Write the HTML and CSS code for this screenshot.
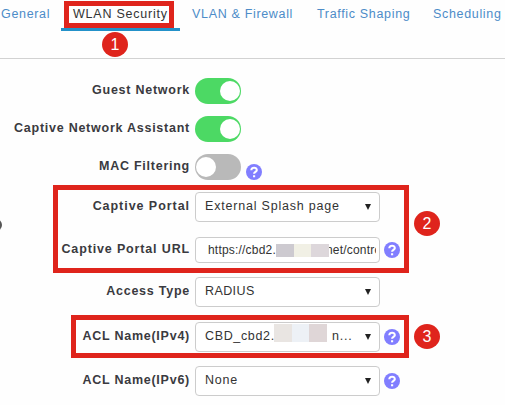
FILE: index.html
```
<!DOCTYPE html>
<html>
<head>
<meta charset="utf-8" />
<title>WLAN Security</title>
<link rel="stylesheet" href="styles.css">
</head>

<body>
<div class="page">
	<ul class="tabs">
    	<li class="t1"><span>General</span></li>
        <li class="t2 active"><span>WLAN Security</span></li>
        <li class="t3"><span>VLAN &amp; Firewall</span></li>
        <li class="t4"><span>Traffic Shaping</span></li>
        <li class="t5"><span>Scheduling</span></li>
    </ul>
    <div class="form">
    	<div class="row sw">
        	<label>Guest Network</label>
            <span class="toggle on"></span>
        </div>
        <div class="row sw">
        	<label>Captive Network Assistant</label>
            <span class="toggle on"></span>
        </div>
        <div class="row sw">
        	<label>MAC Filtering</label>
            <span class="toggle"></span>
            <svg class="help low" viewBox="0 0 16 16"><circle cx="8" cy="8" r="8" /><path d="M5.3 6.2C5.3 2.8 10.9 2.9 10.8 6.1C10.7 7.9 8.1 7.8 8.1 9.8M8.1 11.2V13.2" /></svg>
        </div>
        <div class="row portal">
        	<label>Captive Portal</label>
            <div class="select"><span>External Splash page</span><i></i></div>
        </div>
        <div class="row url">
        	<label>Captive Portal URL</label>
            <div class="input"><span>https://cbd2.</span><b class="mosaic m1"></b><span class="tail">net/contro</span></div>
            <svg class="help" viewBox="0 0 16 16"><circle cx="8" cy="8" r="8" /><path d="M5.3 6.2C5.3 2.8 10.9 2.9 10.8 6.1C10.7 7.9 8.1 7.8 8.1 9.8M8.1 11.2V13.2" /></svg>
        </div>
        <div class="row access">
        	<label>Access Type</label>
            <div class="select radius"><span>RADIUS</span><i></i></div>
        </div>
        <div class="row acl">
        	<label>ACL Name(IPv4)</label>
            <div class="select"><span class="host">CBD_cbd2.</span><b class="mosaic m2"></b><span>n...</span><i></i></div>
            <svg class="help" viewBox="0 0 16 16"><circle cx="8" cy="8" r="8" /><path d="M5.3 6.2C5.3 2.8 10.9 2.9 10.8 6.1C10.7 7.9 8.1 7.8 8.1 9.8M8.1 11.2V13.2" /></svg>
        </div>
        <div class="row acl">
        	<label>ACL Name(IPv6)</label>
            <div class="select"><span>None</span><i></i></div>
            <svg class="help" viewBox="0 0 16 16"><circle cx="8" cy="8" r="8" /><path d="M5.3 6.2C5.3 2.8 10.9 2.9 10.8 6.1C10.7 7.9 8.1 7.8 8.1 9.8M8.1 11.2V13.2" /></svg>
        </div>
    </div>
    <!-- step marks -->
    <div class="frame f1"></div>
    <div class="frame f2"></div>
    <div class="frame f3"></div>
    <span class="step s1">1</span>
    <span class="step s2">2</span>
    <span class="step s3">3</span>
    <span class="dot"></span>
</div>
</body>
</html>
```

FILE: styles.css
```
*{ margin:0; padding:0; box-sizing:border-box;}
body{ background:#fefefe; font:12.5px "Liberation Sans", Arial, sans-serif; color:#333; overflow:hidden;}
.page{ width:505px; height:405px; position:relative; overflow:hidden;}

.tabs{ display:flex; height:59px; border-bottom:1px solid #d2d2d2; list-style:none;}
.tabs li{ height:31px; padding:7px 0 0 12px; line-height:14px; letter-spacing:0.67px; color:#4d8cc8; white-space:nowrap; flex:none;}
.tabs .t1{ width:61px; padding-left:1px;}
.tabs .t2{ width:119px;}
.tabs .t3{ width:125px;}
.tabs .t4{ width:116px;}
.tabs .t5{ width:84px;}
.tabs .active{ color:#333; border-bottom:3px solid #2391c9; letter-spacing:0.78px;}

.form{ padding-top:19px;}
.row{ display:flex; align-items:center;}
.row label{ width:190px; margin-right:5px; text-align:right; font-weight:bold; letter-spacing:0.75px; line-height:14px; color:#3a3a40; white-space:nowrap; flex:none;}
.sw{ height:26px; margin-bottom:12px;}
.sw label{ padding-bottom:3px;}
.portal{ height:30px; margin-bottom:15px;}
.url{ height:26px; margin-bottom:14px;}
.access{ height:30px; margin-bottom:15px;}
.acl{ height:30px; margin-bottom:14px;}
.portal label, .access label, .acl label{ padding-bottom:3px;}
.portal label{ letter-spacing:0.95px;}
.url label{ padding-bottom:3px; letter-spacing:0.85px;}

.toggle{ width:46px; height:26px; border-radius:13px; background:#b9b9b9; padding:3px 1px; flex:none;}
.toggle:before{ content:""; display:block; width:20px; height:20px; border-radius:50%; background:#fff;}
.on{ background:#4cd964; padding-left:25px;}

.select, .input{ width:185px; height:30px; border:1px solid #ccc; border-radius:4px; background:#fff; display:flex; align-items:center; white-space:nowrap; flex:none;}
.select{ padding:0 8px 0 9px; letter-spacing:0.8px;}
.select span{ padding-bottom:2px;}
.select i{ margin-left:auto; border:3.5px solid transparent; border-top:6px solid #222; border-bottom:0;}
.radius{ letter-spacing:0.4px;}
.input{ height:26px; padding:0 4px 0 12px; font-size:12px; letter-spacing:0.2px; overflow:hidden;}
.input span{ flex:none;}
.input .tail{ width:50px; margin-left:-3px; overflow:hidden;}
.host{ width:69px; letter-spacing:0.65px;}
.mosaic{ width:53px; flex:none; position:relative; z-index:1;}
.m1{ height:13px; background:linear-gradient(90deg, #cdcad0 18px, #f1f0e5 18px, #f1f0e5 35px, #ddd7db 35px);}
.m2{ height:18px; margin:-8px 5px 0 0; background:linear-gradient(90deg, #e9e5e2 18px, #edf1f6 18px, #edf1f6 35px, #dfd6d7 35px);}

.help{ width:16px; height:16px; margin-left:4px; flex:none;}
.help circle{ fill:#817eff;}
.help path{ fill:none; stroke:#fff; stroke-width:2.1;}
.low{ margin:9px 0 0 5px;}

.frame{ position:absolute; border:5px solid #df241c;}
.f1{ left:64px; top:1px; width:110px; height:27px;}
.f2{ left:53px; top:185px; width:356px; height:88px;}
.f3{ left:71px; top:315px; width:338px; height:43px;}
.step{ position:absolute; width:26px; height:25px; border-radius:50%; background:#df241c; color:#fff; font-size:16px; line-height:25px; text-align:center;}
.s1{ left:102px; top:32px;}
.s2{ left:414px; top:211px;}
.s3{ left:414px; top:324px;}
.dot{ position:absolute; left:-10px; top:219px; width:12px; height:12px; border-radius:50%; background:#555;}
```
